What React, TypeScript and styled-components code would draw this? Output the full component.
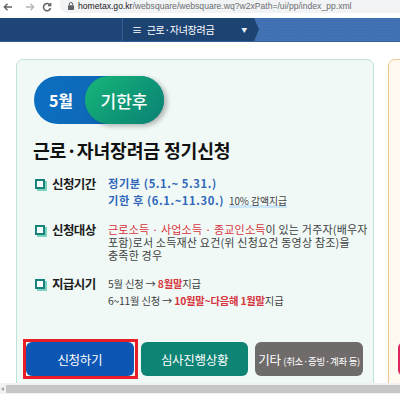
import React from "react";
import styled, { createGlobalStyle } from "styled-components";

const Global = createGlobalStyle`
  html, body { margin: 0; padding: 0; background: #fff; }
  body { font-family: "Noto Sans CJK KR", "Noto Sans", sans-serif; overflow: hidden; }
  * { box-sizing: border-box; }
`;

const Page = styled.div`
  width: 400px;
  height: 394px;
  display: flex;
  flex-direction: column;
  overflow: hidden;
  background: #fff;
`;

const BrowserBar = styled.div`
  height: 14px;
  display: flex;
  align-items: center;
  margin-bottom: 4px;
`;

const NavIcon = styled.span<{ $left: number; $color: string }>`
  display: flex;
  align-items: center;
  justify-content: center;
  width: 12px;
  height: 12px;
  margin-left: ${(p) => p.$left}px;
  color: ${(p) => p.$color};
`;

const AddressPill = styled.div`
  margin-left: 7px;
  flex: 1;
  height: 14px;
  margin-top: -2px;
  border-radius: 0 0 0 8px;
  background: #f1f3f4;
  display: flex;
  align-items: center;
  padding-left: 8px;
  gap: 4px;
  font-family: "Liberation Sans", Arial, sans-serif;
  font-size: 8.6px;
  color: #6b6e72;
  white-space: nowrap;
`;

const Host = styled.span`
  color: #202124;
`;

const NavBar = styled.div`
  height: 24px;
  display: flex;
  background: #3f70b1;
  background-image: radial-gradient(rgba(255, 255, 255, 0.06) 1px, transparent 1px);
  background-size: 3px 3px;
  border-bottom: 1px solid #33609c;
`;

const NavLeft = styled.div`
  width: 123px;
  background: #1f4678;
  border-right: 1px solid #35608f;
`;

const NavMenu = styled.div`
  width: 136px;
  background: #1d4373;
  clip-path: polygon(0 0, calc(100% - 5px) 0, 100% 50%, calc(100% - 5px) 100%, 0 100%);
  display: flex;
  align-items: center;
  padding-left: 9px;
  color: #fff;
  font-size: 10px;
  letter-spacing: -0.3px;
  gap: 5px;
`;

const MenuCaret = styled.span`
  margin-left: auto;
  margin-right: 12px;
  font-size: 6px;
  color: #e8eef7;
`;

const Content = styled.div`
  flex: 1;
  display: flex;
  gap: 14px;
  padding: 17px 0 0 16px;
  overflow: hidden;
`;

const Card = styled.div<{ $w: number; $border: string; $bg: string }>`
  flex: 0 0 ${(p) => p.$w}px;
  min-width: 0;
  height: 340px;
  border: 1px solid ${(p) => p.$border};
  background: ${(p) => p.$bg};
  border-radius: 7px;
  display: flex;
  flex-direction: column;
  padding: 16px 10px 22px 9px;
`;

const Inner = styled.div`
  padding-left: 8px;
`;

const Badge = styled.div`
  display: inline-flex;
  align-items: center;
  height: 48px;
  border-radius: 24px;
  background: linear-gradient(100deg, #0b6fc2 0%, #1461ac 100%);
  padding-left: 15px;
`;

const BadgeText = styled.span`
  color: #fff;
  font-weight: 700;
  font-size: 16px;
  letter-spacing: -0.3px;
`;

const BadgeGreen = styled.div`
  margin-left: 12px;
  width: 79px;
  height: 48px;
  border-radius: 24px;
  background: linear-gradient(135deg, #17b779 0%, #0f9a76 50%, #0b8175 100%);
  box-shadow: 3px 2px 5px rgba(0, 0, 0, 0.28);
  display: flex;
  align-items: center;
  justify-content: center;
  color: #fff;
  font-size: 17px;
  font-weight: 500;
`;

const Title = styled.h1`
  margin: 14px 0 0 -1px;
  font-size: 18.3px;
  line-height: 24px;
  font-weight: 700;
  color: #111;
  letter-spacing: -0.2px;
`;

const List = styled.div`
  margin-top: 15px;
  display: flex;
  flex-direction: column;
  gap: 15px;
`;

const Row = styled.div`
  display: grid;
  grid-template-columns: 74px 1fr;
`;

const Label = styled.div`
  display: flex;
  align-items: center;
  height: 13px;
  gap: 7px;
  font-size: 12.5px;
  font-weight: 700;
  color: #1d1d1d;
  letter-spacing: -0.6px;
  padding-left: 1px;
`;

const Check = styled.span`
  width: 10px;
  height: 10px;
  flex: 0 0 10px;
  border: 2px solid #16847c;
  background: #fff;
  box-shadow: 2px 2px 0 #7ed3c0;
`;

const Lines = styled.div<{ $gap: number; $size: number; $ls: number }>`
  display: flex;
  flex-direction: column;
  gap: ${(p) => p.$gap}px;
  font-size: ${(p) => p.$size}px;
  line-height: 13px;
  color: #3f3f3f;
  letter-spacing: ${(p) => p.$ls}px;
  white-space: nowrap;
`;

const Blue = styled.span`
  color: #2f66b9;
  font-weight: 700;
`;

const Red = styled.span<{ $bold?: boolean }>`
  color: #d8343c;
  font-weight: ${(p) => (p.$bold ? 700 : 400)};
`;

const Note = styled.span`
  margin-left: 5px;
  font-size: 9.8px;
  letter-spacing: 0;
  color: #444;
  background: linear-gradient(transparent 78%, #c9e5f6 78%);
`;

const Buttons = styled.div`
  margin-top: auto;
  display: flex;
  gap: 7px;
`;

const Btn = styled.button<{ $bg: string; $focus?: boolean }>`
  position: relative;
  flex: 1;
  height: 34px;
  border: none;
  border-radius: 6px;
  background: ${(p) => p.$bg};
  color: #fff;
  font-family: "Noto Sans CJK KR", sans-serif;
  font-size: 12.5px;
  letter-spacing: -0.3px;
  padding: 0;
  outline: none;
  &::after {
    content: "";
    display: ${(p) => (p.$focus ? "block" : "none")};
    position: absolute;
    inset: -3px -4px -3px -3px;
    border: 3px solid #e81d25;
  }
`;

const Small = styled.span`
  font-size: 9.5px;
`;

const PinkBtn = styled.div`
  margin-top: auto;
  height: 34px;
  width: 40px;
  border-radius: 6px;
  background: #e0245e;
`;

const ScrollBar = styled.div`
  height: 11px;
  background: #f1f1f1;
  display: flex;
  align-items: center;
  padding: 0 0 0 1px;
  gap: 2px;
`;

const ScrollArrow = styled.span`
  width: 0;
  height: 0;
  border-top: 2px solid transparent;
  border-bottom: 2px solid transparent;
  border-right: 3px solid #a3a3a3;
`;

const Thumb = styled.div`
  flex: 1;
  height: 8px;
  background: #c6c6c6;
`;

export default function App() {
  return (
    <Page>
      <Global />
      <BrowserBar>
        <NavIcon $left={2} $color="#5f6368">
          <svg width="10" height="10" viewBox="0 0 10 10" fill="none" stroke="currentColor" strokeWidth="1.4">
            <path d="M9 5H1.5M4.5 1.8L1.3 5l3.2 3.2" />
          </svg>
        </NavIcon>
        <NavIcon $left={10} $color="#b3b5b8">
          <svg width="10" height="10" viewBox="0 0 10 10" fill="none" stroke="currentColor" strokeWidth="1.3">
            <path d="M1 5h7.5M5.5 1.8L8.7 5 5.5 8.2" />
          </svg>
        </NavIcon>
        <NavIcon $left={5} $color="#5f6368">
          <svg width="10" height="10" viewBox="0 0 10 10" fill="none" stroke="currentColor" strokeWidth="1.5">
            <path d="M8.2 3.3A3.6 3.6 0 1 0 8.6 6" />
            <path d="M8.6 1v2.6H6" />
          </svg>
        </NavIcon>
        <AddressPill>
          <svg width="6" height="8" viewBox="0 0 6 8">
            <rect x="0" y="3.2" width="6" height="4.8" rx="0.8" fill="#5f6368" />
            <path d="M1.3 3.4V2.2a1.7 1.7 0 0 1 3.4 0v1.2" fill="none" stroke="#5f6368" strokeWidth="1" />
          </svg>
          <span>
            <Host>hometax.go.kr</Host>/websquare/websquare.wq?w2xPath=/ui/pp/index_pp.xml
          </span>
        </AddressPill>
      </BrowserBar>
      <NavBar>
        <NavLeft />
        <NavMenu>
          <span>≡</span>
          <span>근로·자녀장려금</span>
          <MenuCaret>▼</MenuCaret>
        </NavMenu>
      </NavBar>
      <Content>
        <Card $w={358} $border="#bfe2d9" $bg="#f0f9f6">
          <Inner>
            <Badge>
              <BadgeText>5월</BadgeText>
              <BadgeGreen>기한후</BadgeGreen>
            </Badge>
            <Title>근로·자녀장려금 정기신청</Title>
            <List>
              <Row>
                <Label>
                  <Check />
                  신청기간
                </Label>
                <Lines $gap={4} $size={11.2} $ls={0.6}>
                  <div>
                    <Blue>정기분 (5.1.~ 5.31.)</Blue>
                  </div>
                  <div>
                    <Blue>기한 후 (6.1.~11.30.)</Blue>
                    <Note>10% 감액지급</Note>
                  </div>
                </Lines>
              </Row>
              <Row>
                <Label>
                  <Check />
                  신청대상
                </Label>
                <Lines $gap={0} $size={11} $ls={0.2}>
                  <div>
                    <Red>근로소득 · 사업소득 · 종교인소득</Red>이 있는 거주자(배우자
                  </div>
                  <div>포함)로서 소득재산 요건(위 신청요건 동영상 참조)을</div>
                  <div>충족한 경우</div>
                </Lines>
              </Row>
              <Row>
                <Label>
                  <Check />
                  지급시기
                </Label>
                <Lines $gap={4} $size={10.3} $ls={-0.2}>
                  <div>
                    5월 신청 → <Red $bold>8월말</Red>지급
                  </div>
                  <div>
                    6~11월 신청 → <Red $bold>10월말~다음해 1월말</Red>지급
                  </div>
                </Lines>
              </Row>
            </List>
          </Inner>
          <Buttons>
            <Btn $bg="#0e56b4" $focus>
              신청하기
            </Btn>
            <Btn $bg="#0e8474">심사진행상황</Btn>
            <Btn $bg="#6e6b6a">
              기타 <Small>(취소·증빙·계좌 등)</Small>
            </Btn>
          </Buttons>
        </Card>
        <Card $w={60} $border="#f1c493" $bg="#fff9ef">
          <PinkBtn />
        </Card>
      </Content>
      <ScrollBar>
        <ScrollArrow />
        <Thumb />
      </ScrollBar>
    </Page>
  );
}
